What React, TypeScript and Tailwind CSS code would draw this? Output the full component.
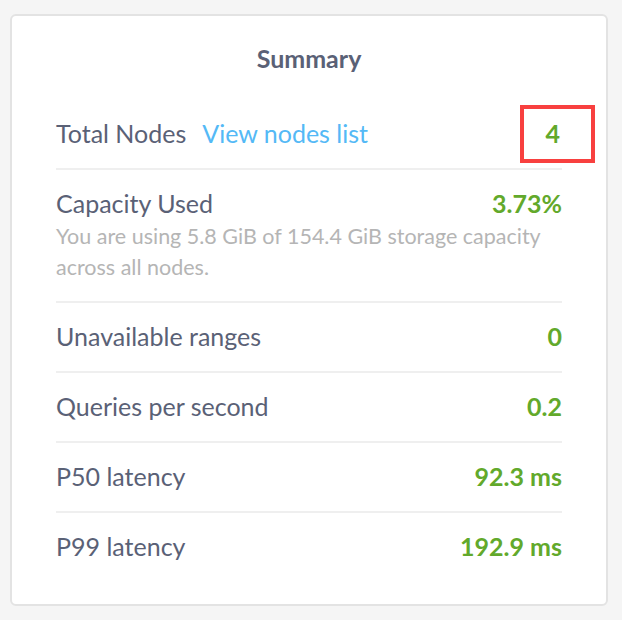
const rows = [
  { label: 'Unavailable ranges', value: '0' },
  { label: 'Queries per second', value: '0.2' },
  { label: 'P50 latency', value: '92.3 ms' },
  { label: 'P99 latency', value: '192.9 ms' },
];

export default function App() {
  return (
    <div className="min-h-[620px] bg-[#f5f5f5] pl-[10px] pt-[14px] font-['Lato','Liberation_Sans',sans-serif]">
      <div className="relative w-[598px] h-[592px] rounded-md border-2 border-[#e3e3e3] bg-white px-[44px]">
        <h2 className="pt-[28px] text-center text-[25px] font-bold leading-[28px] text-[#5a6176]">
          Summary
        </h2>

        <div className="mt-[28px] flex items-center justify-between pt-[20px] pb-[22px] text-[25px] leading-[26px]">
          <div className="flex items-center gap-[16px]">
            <span className="text-[#5a6176]">Total Nodes</span>
            <a href="#" className="text-[#54b9f6]">View nodes list</a>
          </div>
          <span className="pr-[2px] font-bold text-[#62a92b]">4</span>
        </div>

        <div className="border-t-2 border-[#efefef] pt-[20px] pb-[18px]">
          <div className="flex items-center justify-between text-[25px] leading-[26px]">
            <span className="text-[#5a6176]">Capacity Used</span>
            <span className="font-bold text-[#62a92b]">3.73%</span>
          </div>
          <p className="mt-[5px] text-[21.5px] leading-[31px] text-[#b5b5b5]">
            You are using 5.8 GiB of 154.4 GiB storage capacity across all nodes.
          </p>
        </div>

        {rows.map((row) => (
          <div
            key={row.label}
            className="flex items-center justify-between border-t-2 border-[#efefef] pt-[20px] pb-[22px] text-[25px] leading-[26px]"
          >
            <span className="text-[#5a6176]">{row.label}</span>
            <span className="font-bold text-[#62a92b]">{row.value}</span>
          </div>
        ))}

        <div className="absolute left-[508px] top-[89px] h-[58px] w-[75px] border-4 border-[#f8403f]" />
      </div>
    </div>
  );
}
